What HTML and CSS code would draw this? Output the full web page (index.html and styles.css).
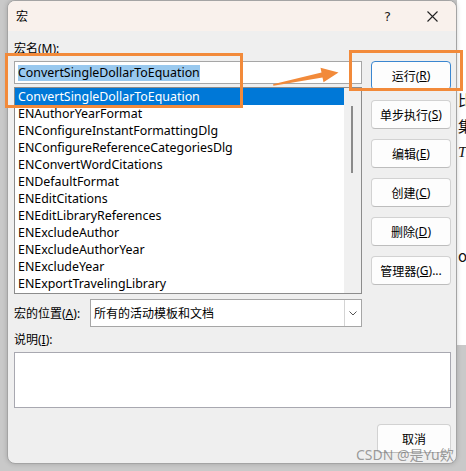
FILE: index.html
```html
<!DOCTYPE html>
<html lang="zh-CN">
<head>
<meta charset="utf-8">
<title>宏</title>
<link rel="stylesheet" href="styles.css">
</head>
<body>
<div class="screen">
  <div class="gutter"></div>
  <div class="dialog">
    <div class="titlebar">
      <span class="title">宏</span>
      <span class="tb-btn help">?</span>
      <span class="tb-btn close">
        <svg width="11" height="11" viewBox="0 0 11 11"><path d="M0.5 0.5 L10.5 10.5 M10.5 0.5 L0.5 10.5" stroke="#222" stroke-width="1.1" fill="none"/></svg>
      </span>
    </div>
    <div class="body">
      <div class="top">
        <div class="left">
          <div class="label">宏名(<u>M</u>):</div>
          <div class="namebox"><span class="sel">ConvertSingleDollarToEquation</span></div>
          <div class="list">
            <div class="items">
              <div class="item selected">ConvertSingleDollarToEquation</div>
              <div class="item">ENAuthorYearFormat</div>
              <div class="item">ENConfigureInstantFormattingDlg</div>
              <div class="item">ENConfigureReferenceCategoriesDlg</div>
              <div class="item">ENConvertWordCitations</div>
              <div class="item">ENDefaultFormat</div>
              <div class="item">ENEditCitations</div>
              <div class="item">ENEditLibraryReferences</div>
              <div class="item">ENExcludeAuthor</div>
              <div class="item">ENExcludeAuthorYear</div>
              <div class="item">ENExcludeYear</div>
              <div class="item">ENExportTravelingLibrary</div>
            </div>
            <div class="scrollbar"><div class="thumb"></div></div>
          </div>
        </div>
        <div class="right">
          <div class="btn default">运行(<u>R</u>)</div>
          <div class="btn">单步执行(<u>S</u>)</div>
          <div class="btn">编辑(<u>E</u>)</div>
          <div class="btn">创建(<u>C</u>)</div>
          <div class="btn">删除(<u>D</u>)</div>
          <div class="btn">管理器(<u>G</u>)...</div>
        </div>
      </div>
      <div class="location">
        <span class="loc-label">宏的位置(<u>A</u>):</span>
        <div class="combo">
          <span class="combo-text">所有的活动模板和文档</span>
          <span class="combo-arrow">
            <svg width="8" height="5" viewBox="0 0 8 5"><path d="M0.5 0.5 L4 4 L7.5 0.5" stroke="#555" stroke-width="1" fill="none"/></svg>
          </span>
        </div>
      </div>
      <div class="label desc-label">说明(<u>I</u>):</div>
      <div class="desc"></div>
      <div class="footer">
        <div class="btn cancel">取消</div>
      </div>
    </div>
  </div>
  <div class="doc">
    <div class="doc-line">比</div>
    <div class="doc-line">集</div>
    <div class="doc-line italic">T</div>
    <div class="doc-line"></div>
    <div class="doc-line"></div>
    <div class="doc-line"></div>
    <div class="doc-line">ou</div>
  </div>

  <div class="mark mark-a"></div>
  <div class="mark mark-b"></div>
  <svg class="arrow" width="466" height="471" viewBox="0 0 466 471">
    <polygon points="273,84.3 321.5,72.6 320.5,67.8 338.5,72.6 323.5,82.2 322.5,77.6 273.4,85.8" fill="#f28a3a"/>
  </svg>
  <div class="watermark">CSDN @是Yu欸</div>
</div>
</body>
</html>
```
FILE: styles.css
```css
html, body {
  margin: 0;
  padding: 0;
}
body {
  width: 466px;
  height: 471px;
  overflow: hidden;
  background: #c9c9c9;
  font-family: "Noto Sans", "Noto Sans CJK SC", sans-serif;
  font-size: 12px;
  color: #000;
}
u {
  text-decoration: underline;
  text-underline-offset: 1px;
}
.screen {
  position: relative;
  width: 466px;
  height: 471px;
  display: flex;
  align-items: flex-start;
}
.gutter {
  width: 7px;
  height: 471px;
  flex: none;
}
.dialog {
  width: 450px;
  height: 464px;
  flex: none;
  box-sizing: border-box;
  border: 1px solid #a4a4a4;
  border-radius: 8px;
  background: #efefef;
  display: flex;
  flex-direction: column;
  overflow: hidden;
  box-shadow: 0 0 5px rgba(0, 0, 0, 0.18);
  position: relative;
  z-index: 1;
}
.titlebar {
  height: 30px;
  flex: none;
  background: #f9f1ec;
  display: flex;
  align-items: center;
  padding-left: 8px;
}
.title {
  flex: 1;
  font-size: 12px;
}
.tb-btn {
  width: 45px;
  height: 30px;
  display: flex;
  align-items: center;
  justify-content: center;
}
.help {
  font-family: "DejaVu Sans", sans-serif;
  font-size: 13px;
  color: #222;
}
.close {
  padding-right: 1px;
}
.body {
  padding: 0 5px 0 6px;
  display: flex;
  flex-direction: column;
}
.top {
  display: flex;
  gap: 9px;
}
.left {
  width: 348px;
  display: flex;
  flex-direction: column;
}
.label {
  margin-top: 9px;
  height: 17px;
  line-height: 17px;
}
.namebox {
  margin-top: 4px;
  height: 23px;
  box-sizing: border-box;
  border: 1px solid #a6a6a6;
  background: #fff;
  padding-left: 3px;
  display: flex;
  align-items: center;
  font-size: 12.4px;
}
.sel {
  background: #99c9ef;
  line-height: 16px;
  height: 16px;
}
.list {
  margin-top: 3px;
  height: 207px;
  box-sizing: border-box;
  border: 1px solid #8c8c8c;
  background: #fff;
  display: flex;
  font-size: 12.4px;
}
.items {
  flex: 1;
  display: flex;
  flex-direction: column;
}
.item {
  height: 17px;
  line-height: 16px;
  padding-top: 1px;
  box-sizing: border-box;
  padding-left: 3px;
  white-space: nowrap;
}
.item.selected {
  background: #0078d7;
  color: #fff;
}
.scrollbar {
  width: 17px;
  flex: none;
  background: #f0f0f0;
  padding-top: 18px;
  box-sizing: border-box;
}
.thumb {
  width: 2px;
  height: 67px;
  margin-left: 7px;
  background: #8a8a8a;
}
.right {
  width: 80px;
  margin-top: 30px;
  display: flex;
  flex-direction: column;
  gap: 10px;
}
.btn {
  height: 29px;
  box-sizing: border-box;
  border: 1px solid #d2d2d2;
  border-bottom-color: #bdbdbd;
  border-radius: 4px;
  background: #fdfdfd;
  display: flex;
  align-items: center;
  justify-content: center;
  white-space: nowrap;
}
.btn.default {
  border: 1px solid #3a86d0;
}
.location {
  margin-top: 5px;
  display: flex;
  align-items: center;
}
.loc-label {
  width: 76px;
  flex: none;
}
.combo {
  width: 272px;
  height: 28px;
  box-sizing: border-box;
  border: 1px solid #a6a6a6;
  background: #fff;
  display: flex;
  align-items: center;
}
.combo-text {
  flex: 1;
  padding-left: 3px;
}
.combo-arrow {
  width: 17px;
  height: 26px;
  box-sizing: border-box;
  border-left: 1px solid #d4d4d4;
  display: flex;
  align-items: center;
  justify-content: center;
}
.desc-label {
  margin-top: 4px;
}
.desc {
  margin-top: 4px;
  height: 56px;
  box-sizing: border-box;
  border: 1px solid #a8a8b0;
  background: #fff;
}
.footer {
  margin-top: 16px;
  display: flex;
  justify-content: flex-end;
}
.btn.cancel {
  width: 74px;
}
.doc {
  flex: 1;
  height: 345px;
  background: #fff;
  padding-top: 87px;
  box-sizing: border-box;
  overflow: hidden;
  font-family: "Noto Sans CJK SC", "Liberation Serif", serif;
  font-size: 15px;
  color: #111;
}
.doc-line {
  height: 26px;
  line-height: 26px;
  white-space: nowrap;
  padding-left: 1px;
}
.doc-line.italic {
  font-family: "Liberation Serif", serif;
  font-style: italic;
}
.mark {
  position: absolute;
  border: 3px solid #f28a3a;
  box-sizing: border-box;
  z-index: 3;
}
.mark-a {
  left: 5px;
  top: 53px;
  width: 238px;
  height: 55px;
}
.mark-b {
  left: 349px;
  top: 50px;
  width: 114px;
  height: 41px;
}
.arrow {
  position: absolute;
  left: 0;
  top: 0;
  z-index: 3;
  pointer-events: none;
}
.watermark {
  position: absolute;
  left: 356px;
  top: 446px;
  z-index: 4;
  font-size: 14px;
  line-height: 18px;
  color: rgba(105, 105, 105, 0.65);
  white-space: nowrap;
}
```
